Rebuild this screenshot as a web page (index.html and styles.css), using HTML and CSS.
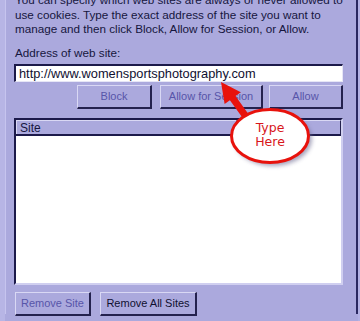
FILE: index.html
```html
<!DOCTYPE html>
<html>
<head>
<meta charset="utf-8">
<link rel="stylesheet" href="styles.css">
</head>
<body>
<div class="window">
  <div class="panel">
    <p class="intro">You can specify which web sites are always or never allowed to<br>use cookies. Type the exact address of the site you want to<br>manage and then click Block, Allow for Session, or Allow.</p>
    <div class="lbl">Address of web site:</div>
    <div class="input">http://www.womensportsphotography.com</div>
    <div class="btnrow">
      <div class="btn dis w-block">Block</div>
      <div class="btn dis w-session">Allow for Session</div>
      <div class="btn dis w-allow">Allow</div>
    </div>
    <div class="list">
      <div class="listhead">
        <div class="col col1">Site</div>
        <div class="col col2"></div>
      </div>
      <div class="listbody"></div>
    </div>
    <div class="btnrow2">
      <div class="btn dis w-rs">Remove Site</div>
      <div class="btn w-ras">Remove All Sites</div>
    </div>
  </div>
  <svg class="callout" width="360" height="321" viewBox="0 0 360 321">
    <defs>
      <filter id="sh" x="-20%" y="-20%" width="140%" height="140%">
        <feGaussianBlur stdDeviation="2"/>
      </filter>
    </defs>
    <polygon fill="#e8120c" points="221,82 240.8,92.3 235.5,96.1 254.8,122.9 249.2,127.1 229.9,100.3 224.6,104.1"/>
    <ellipse cx="273" cy="139" rx="39" ry="27" fill="#6a6890" opacity="0.6" filter="url(#sh)"/>
    <ellipse cx="270" cy="136" rx="38.5" ry="26.5" fill="#ffffff" stroke="#e8120c" stroke-width="3"/>
    <text x="270" y="132" class="ctext" text-anchor="middle">Type</text>
    <text x="270" y="146" class="ctext" text-anchor="middle">Here</text>
  </svg>
</div>
</body>
</html>
```
FILE: styles.css
```css
html, body {
  margin: 0;
  padding: 0;
}
body {
  width: 360px;
  height: 321px;
  overflow: hidden;
  background: #aba9dd;
  font-family: "Liberation Sans", Arial, sans-serif;
  font-size: 11px;
  color: #16163e;
}
.window {
  position: relative;
  width: 360px;
  height: 321px;
  overflow: hidden;
  box-sizing: border-box;
  border-left: 5px solid #b7b5e5;
  border-right: 2px solid #b3b1e3;
  background: #aba9dd;
}
.panel {
  box-sizing: border-box;
  height: 321px;
  border-left: 1px solid #c6c4ee;
  border-right: 2px solid #2a2860;
  padding: 0 13px 0 8px;
}
.intro {
  margin: -7px 0 0 1px;
  font-size: 11.7px;
  line-height: 14.5px;
  white-space: nowrap;
}
.lbl {
  margin: 9px 0 0 1px;
  font-size: 11.7px;
  line-height: 14px;
}
.input {
  box-sizing: border-box;
  margin-top: 4px;
  height: 18px;
  background: #fff;
  border-top: 2px solid #1c1a4a;
  border-left: 2px solid #1c1a4a;
  border-bottom: 1px solid #e6e6f6;
  border-right: 1px solid #e6e6f6;
  font-size: 12.8px;
  line-height: 15px;
  padding-left: 3px;
  color: #101030;
  white-space: nowrap;
}
.btnrow {
  display: flex;
  justify-content: flex-end;
  margin-top: 3px;
}
.btnrow .w-session { margin-left: 8px; }
.btnrow .w-allow { margin-left: 6px; }
.btn {
  box-sizing: border-box;
  height: 24px;
  display: flex;
  align-items: center;
  justify-content: center;
  background: #aba9dd;
  border-top: 1px solid #d9d8f4;
  border-left: 1px solid #d9d8f4;
  border-right: 2px solid #24224e;
  border-bottom: 2px solid #24224e;
  color: #101030;
  white-space: nowrap;
}
.btn.dis { color: #5755a9; }
.w-block { width: 75px; }
.w-session { width: 103px; }
.w-allow { width: 74px; }
.list {
  box-sizing: border-box;
  margin-top: 9px;
  height: 167px;
  border-top: 2px solid #1c1a4a;
  border-left: 2px solid #1c1a4a;
  border-bottom: 2px solid #d0cff0;
  border-right: 2px solid #d0cff0;
  background: #fff;
  display: flex;
  flex-direction: column;
}
.listhead {
  display: flex;
  height: 16px;
  box-sizing: border-box;
  border-bottom: 2px solid #1c1a4a;
  background: #aba9dd;
}
.col {
  box-sizing: border-box;
  height: 14px;
  line-height: 14px;
  border-top: 1px solid #d9d8f4;
  border-left: 1px solid #d9d8f4;
  border-right: 1px solid #24224e;
}
.col1 {
  width: 221px;
  padding-left: 3px;
  font-size: 12px;
}
.col2 { flex: 1; }
.listbody { flex: 1; }
.btnrow2 {
  display: flex;
  gap: 9px;
  margin-top: 7px;
  padding-left: 1px;
}
.w-rs { width: 76px; }
.w-ras { width: 97px; }
.callout {
  position: absolute;
  left: -5px;
  top: 0;
  pointer-events: none;
}
.ctext {
  font-family: "DejaVu Sans", Verdana, sans-serif;
  font-size: 12.5px;
  fill: #d8161a;
}
```
